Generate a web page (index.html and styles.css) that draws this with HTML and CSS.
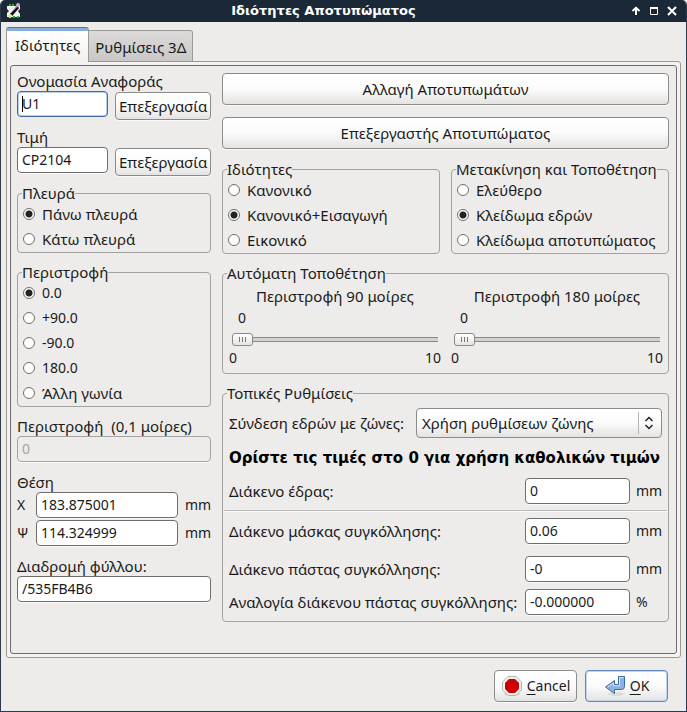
FILE: index.html
```html
<!DOCTYPE html>
<html lang="el">
<head>
<meta charset="utf-8">
<title>Ιδιότητες Αποτυπώματος</title>
<link rel="stylesheet" href="styles.css">
</head>
<body>
<div class="window">
  <header class="titlebar">
    <svg class="app-icon" viewBox="0 0 16 16" aria-hidden="true">
      <path d="M1 3h13v11H1z" fill="#f2f2f2"/>
      <path d="M3 1h2v2H3zM6 1h2v2H6zM7 13h2v2H7zM11 13h2v2h-2z" fill="#1db31d"/>
      <path d="M1 6l2 2-2 2zM14 6l-2 2 2 3z" fill="#1b2838"/>
      <path d="M12 4L5 12" stroke="#111" stroke-width="3"/>
      <path d="M11 4L5 10" stroke="#777" stroke-width="1"/>
      <circle cx="12" cy="2" r="2" fill="#d9a3c4"/>
      <circle cx="4" cy="13" r="2" fill="#e8e29a"/>
    </svg>
    <h1>Ιδιότητες Αποτυπώματος</h1>
    <div class="window-controls">
      <button type="button" aria-label="Shade"><svg viewBox="0 0 10 10"><path d="M5 1v8M1.500 5L5 1.800 8.500 5" fill="none" stroke="#fff" stroke-width="2"/></svg></button>
      <button type="button" aria-label="Maximize"><svg viewBox="0 0 10 10"><path d="M1.500 1.500h7v7h-7z" fill="none" stroke="#fff"/><path d="M1 2h8" stroke="#fff" stroke-width="2"/></svg></button>
      <button type="button" aria-label="Close"><svg viewBox="0 0 10 10"><path d="M1 1l8 8M9 1L1 9" stroke="#fff" stroke-width="2"/></svg></button>
    </div>
  </header>

  <form class="content">
    <nav class="tabs">
      <button type="button" class="tab tab-active">Ιδιότητες</button>
      <button type="button" class="tab">Ρυθμίσεις 3Δ</button>
    </nav>
    <div class="notebook">
      <div class="page">
        <section class="left">
          <label for="ref">Ονομασία Αναφοράς</label>
          <div class="edit-row"><input class="text focused" id="ref" value="U1"><button type="button" class="btn">Επεξεργασία</button></div>
          <label class="gap-s" for="val">Τιμή</label>
          <div class="edit-row"><input class="text" id="val" value="CP2104"><button type="button" class="btn">Επεξεργασία</button></div>
          <fieldset class="gap-s">
            <legend>Πλευρά</legend>
            <div class="radios">
              <label><input type="radio" name="side" checked>Πάνω πλευρά</label>
              <label><input type="radio" name="side">Κάτω πλευρά</label>
            </div>
          </fieldset>
          <fieldset class="gap-m">
            <legend>Περιστροφή</legend>
            <div class="radios">
              <label class="num"><input type="radio" name="rot" checked>0.0</label>
              <label class="num"><input type="radio" name="rot">+90.0</label>
              <label class="num"><input type="radio" name="rot">-90.0</label>
              <label class="num"><input type="radio" name="rot">180.0</label>
              <label><input type="radio" name="rot">Άλλη γωνία</label>
            </div>
          </fieldset>
          <label class="gap-m pre" for="angle">Περιστροφή  (0,1 μοίρες)</label>
          <input class="text" id="angle" value="0" disabled>
          <div class="gap-l">Θέση</div>
          <div class="pos">
            <label class="num" for="px">Χ</label><input class="text" id="px" value="183.875001"><span class="num">mm</span>
            <label class="num" for="py">Ψ</label><input class="text" id="py" value="114.324999"><span class="num">mm</span>
          </div>
          <label class="gap-l" for="sheet">Διαδρομή φύλλου:</label>
          <input class="text" id="sheet" value="/535FB4B6">
        </section>

        <section class="right">
          <button type="button" class="btn btn-tall">Αλλαγή Αποτυπωμάτων</button>
          <button type="button" class="btn btn-tall gap-btn">Επεξεργαστής Αποτυπώματος</button>
          <div class="pair gap-l">
            <fieldset>
              <legend>Ιδιότητες</legend>
              <div class="radios">
                <label><input type="radio" name="attr">Κανονικό</label>
                <label><input type="radio" name="attr" checked>Κανονικό+Εισαγωγή</label>
                <label><input type="radio" name="attr">Εικονικό</label>
              </div>
            </fieldset>
            <fieldset>
              <legend>Μετακίνηση και Τοποθέτηση</legend>
              <div class="radios">
                <label><input type="radio" name="lock">Ελεύθερο</label>
                <label><input type="radio" name="lock" checked>Κλείδωμα εδρών</label>
                <label><input type="radio" name="lock">Κλείδωμα αποτυπώματος</label>
              </div>
            </fieldset>
          </div>
          <fieldset class="gap-m">
            <legend>Αυτόματη Τοποθέτηση</legend>
            <div class="sliders">
              <div class="slider">
                <label for="r90">Περιστροφή 90 μοίρες</label>
                <output class="num" for="r90">0</output>
                <input type="range" id="r90" min="0" max="10" value="0">
                <div class="limits num"><span>0</span><span>10</span></div>
              </div>
              <div class="slider">
                <label for="r180">Περιστροφή 180 μοίρες</label>
                <output class="num" for="r180">0</output>
                <input type="range" id="r180" min="0" max="10" value="0">
                <div class="limits num"><span>0</span><span>10</span></div>
              </div>
            </div>
          </fieldset>
          <fieldset class="gap-m local">
            <legend>Τοπικές Ρυθμίσεις</legend>
            <div class="zone-row">
              <label for="zone">Σύνδεση εδρών με ζώνες:</label>
              <div class="combo">
                <select id="zone"><option>Χρήση ρυθμίσεων ζώνης</option></select>
                <svg viewBox="0 0 10 14" aria-hidden="true"><path d="M1.500 5L5 1.500 8.500 5M1.500 9L5 12.500 8.500 9" fill="none" stroke="#222" stroke-width="1.500"/></svg>
              </div>
            </div>
            <p class="note">Ορίστε τις τιμές στο 0 για χρήση καθολικών τιμών</p>
            <div class="value-row"><label for="pad">Διάκενο έδρας:</label><input class="text" id="pad" value="0"><span class="num">mm</span></div>
            <hr>
            <div class="value-row"><label for="mask">Διάκενο μάσκας συγκόλλησης:</label><input class="text" id="mask" value="0.06"><span class="num">mm</span></div>
            <div class="value-row row-paste"><label for="paste">Διάκενο πάστας συγκόλλησης:</label><input class="text" id="paste" value="-0"><span class="num">mm</span></div>
            <div class="value-row row-ratio"><label for="ratio">Αναλογία διάκενου πάστας συγκόλλησης:</label><input class="text" id="ratio" value="-0.000000"><span class="num">%</span></div>
          </fieldset>
        </section>
      </div>
    </div>

    <footer class="actions">
      <button type="button" class="btn btn-tall num">
        <svg class="btn-icon" viewBox="0 0 22 22" aria-hidden="true">
          <ellipse cx="11" cy="19" rx="8" ry="2" fill="#d5d4d2"/>
          <path d="M7 1.500h8L20.500 7v8L15 20.500H7L1.500 15V7z" fill="#f4f4f2" stroke="#b4b6b0"/>
          <path d="M8 4h6l4 4v6l-4 4H8l-4-4V8z" fill="#cc0000"/>
        </svg>
        <span><u>C</u>ancel</span>
      </button>
      <button type="button" class="btn btn-tall btn-default num">
        <svg class="btn-icon" viewBox="0 0 22 22" aria-hidden="true">
          <ellipse cx="12" cy="19" rx="8" ry="2" fill="#dddcda"/>
          <path d="M14.500 1.500h6v10q0 3-3 3h-7v4L1.500 12l9-6.500v4h4z" fill="#8fb3dd" stroke="#3a69a8"/>
          <path d="M3.500 12l6-4v2.500h6v-8h4" fill="none" stroke="#d5e4f5"/>
        </svg>
        <span><u>O</u>K</span>
      </button>
    </footer>
  </form>
</div>
</body>
</html>
```
FILE: styles.css
```css
* { box-sizing: border-box; }

body {
  margin: 0;
  background: #fff;
  color: #1a1a1a;
  font: 15px/20px "Noto Sans", sans-serif;
}

button, input, select { font: inherit; color: inherit; margin: 0; }
label, section > div, output { display: block; }
svg { display: block; }
.num { font-size: 14px; }

.window {
  min-height: 100vh;
  display: flex;
  flex-direction: column;
  background: #edecea;
  border: 1px solid #2d3a4b;
  border-top: 0;
  border-radius: 5px 5px 0 0;
  overflow: hidden;
}

.titlebar {
  height: 22px;
  display: grid;
  grid-template-columns: auto 1fr auto;
  align-items: center;
  padding: 0 9px 0 5px;
  background: #1b2838;
}
.titlebar h1 {
  margin: 0;
  padding-right: 6px;
  color: #fff;
  font: bold 13px/22px "DejaVu Sans", sans-serif;
  text-align: center;
}
.app-icon { width: 16px; height: 16px; }
.window-controls { display: flex; justify-content: flex-end; gap: 8px; }
.window-controls button { width: 10px; height: 10px; padding: 0; border: 0; background: none; }

.content { flex: 1; display: flex; flex-direction: column; padding: 5px 5px 9px; }

.tabs { display: flex; align-items: flex-end; height: 35px; margin-bottom: -1px; position: relative; }
.tab {
  height: 32px;
  padding: 2px 6px 0;
  border: 1px solid #9a9996;
  border-left: 0;
  border-radius: 0 3px 0 0;
  background: linear-gradient(#dcdbd9, #c9c8c6);
}
.tab-active {
  height: 35px;
  padding: 0 8px;
  border: 1px solid #9a9996;
  border-top: 1px solid #4a76ad;
  border-bottom: 0;
  border-radius: 3px 3px 0 0;
  background: linear-gradient(#86aee0 3px, #fff 3px, #f1f0ee);
}

.notebook {
  flex: 1;
  display: flex;
  padding: 3px;
  border: 1px solid #9a9996;
  border-radius: 0 3px 3px 3px;
  background: #f4f3f2;
}
.page {
  flex: 1;
  min-width: 0;
  display: grid;
  grid-template-columns: 194px 1fr;
  gap: 11px;
  align-items: start;
  padding: 5px 7px 0 6px;
  border: 1px solid #6e6d6b;
  border-radius: 3px;
  background: #edecea;
}
.left, .right { display: flex; flex-direction: column; min-width: 0; }
.right { padding-top: 2px; }

.gap-s { margin-top: 7px; }
.gap-m { margin-top: 9px; }
.gap-l { margin-top: 10px; }
.gap-btn { margin-top: 12px; }
.pre { white-space: pre; }

.text {
  width: 100%;
  height: 26px;
  padding: 0 4px 2px;
  border: 1px solid #6f6e6c;
  border-radius: 4px;
  background: #fff;
  box-shadow: 0 1px #fafafa;
  font-size: 14px;
}
.text:disabled { color: #a5a4a2; border-color: #a5a4a2; background: #edecea; }
.focused {
  border-color: #3f6ba8;
  box-shadow: inset 0 0 0 1px #b9cde8;
  background: linear-gradient(#000, #000) 4px 4px / 1px 16px no-repeat #fff;
}

.edit-row { display: grid; grid-template-columns: 91px 96px; gap: 7px; align-items: start; }
.edit-row .btn { margin-top: 1px; }

.btn {
  height: 28px;
  padding: 0 3px;
  border: 1px solid #8d8c8a;
  border-radius: 4px;
  background: linear-gradient(#fff, #fbfbfb 50%, #e4e3e2);
  box-shadow: 0 1px #fafafa;
}
.btn-tall { height: 32px; }

fieldset {
  min-width: 0;
  margin-left: 0;
  margin-right: 0;
  margin-bottom: 0;
  padding: 1px 4px 3px;
  border: 1px solid #a3a2a0;
  border-radius: 4px;
}
fieldset:not([class]) { margin-top: 0; }
legend { padding: 0; line-height: 20px; white-space: nowrap; }

.radios { display: grid; gap: 5px; padding-left: 1px; }
.radios label { display: flex; align-items: center; gap: 7px; white-space: nowrap; }
input[type="radio"] {
  appearance: none;
  width: 12px;
  height: 12px;
  border: 1px solid #6f6e6c;
  border-radius: 50%;
  background: #fff;
}
input[type="radio"]:checked { background: radial-gradient(circle, #222 3px, #fff 4px); }

.pos { display: grid; grid-template-columns: 12px 1fr 26px; column-gap: 7px; row-gap: 2px; align-items: center; }

.pair { display: grid; grid-template-columns: 1fr 1fr; gap: 11px; }

.sliders { display: grid; grid-template-columns: 1fr 1fr; gap: 10px; padding: 2px 1px 2px 2px; }
.slider label { text-align: center; margin-bottom: 2px; }
.slider output { padding-left: 9px; }
.slider input {
  appearance: none;
  display: block;
  width: calc(100% - 6px);
  height: 13px;
  margin: 5px 3px 2px;
  background: linear-gradient(transparent 4px, #8b8a88 4px 5px, #d2d1cf 5px 8px, #8b8a88 8px 9px, transparent 9px);
}
.slider input::-webkit-slider-thumb {
  appearance: none;
  width: 21px;
  height: 13px;
  border: 1px solid #8b8a88;
  border-radius: 3px;
  background:
    linear-gradient(90deg, #777 1px, transparent 1px 3px, #777 3px 4px, transparent 4px 6px, #777 6px) 6px 3px / 7px 5px no-repeat,
    linear-gradient(#fff, #e6e5e4);
}
.limits { display: flex; justify-content: space-between; }

.local { padding: 5px 1px 6px; }
.local legend { margin-left: 3px; }
.zone-row { display: grid; grid-template-columns: 182px 1fr; gap: 5px; align-items: center; margin: 0 5px; }
.zone-row label { white-space: nowrap; }
.combo { position: relative; }
.combo select {
  appearance: none;
  display: block;
  width: 100%;
  height: 30px;
  padding: 0 28px 0 5px;
  border: 1px solid #8d8c8a;
  border-radius: 4px;
  background:
    linear-gradient(#b5b4b2, #b5b4b2) calc(100% - 22px) 3px / 1px 22px no-repeat,
    linear-gradient(#fff, #fbfbfb 50%, #e4e3e2);
}
.combo svg { position: absolute; right: 8px; top: 8px; width: 10px; height: 14px; pointer-events: none; }
.note {
  margin: 10px 5px;
  font: bold 15px/20px "DejaVu Sans", sans-serif;
  color: #000;
  white-space: nowrap;
}
.value-row { display: grid; grid-template-columns: 1fr 105px 26px; column-gap: 6px; align-items: center; margin: 0 5px; }
.value-row label { white-space: nowrap; }
hr { width: 100%; height: 2px; margin: 6px 0; border: 0; border-top: 1px solid #b9b8b6; background: #fafafa; }
.row-paste { margin-top: 12px; }
.row-ratio { margin-top: 7px; }

.actions { display: flex; justify-content: flex-end; gap: 8px; padding: 12px 13px 0 0; }
.actions .btn { width: 83px; display: flex; align-items: center; justify-content: center; gap: 4px; }
.btn-icon { width: 22px; height: 22px; }
.actions .btn-default { border-color: #6288bb; box-shadow: inset 0 0 0 1px #c5d6ec; }
.actions u { text-underline-offset: 3px; }
```
